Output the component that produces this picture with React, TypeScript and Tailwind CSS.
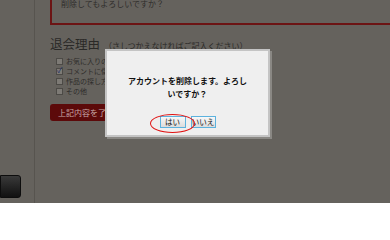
import React from 'react';

const reasons = [
  { label: 'お気に入りの作品が見つからない', checked: false },
  { label: 'コメントに傷ついた', checked: true },
  { label: '作品の探し方がわからない', checked: false },
  { label: 'その他', checked: false },
];

const font = { fontFamily: '"Noto Sans CJK JP", "Noto Sans", sans-serif' };

const App = () => {
  return (
    <div className="relative flex w-[390px] h-[203px] overflow-hidden bg-[#65625d]" style={font}>
      {/* left rail */}
      <div className="flex flex-col justify-end w-[35px] shrink-0 border-r border-[#57544f] pb-[5px]">
        <div className="w-[21px] h-[23px] rounded-r-[3px] border border-[#0d0d0d] bg-gradient-to-b from-[#3a3a3a] to-[#111111]" />
      </div>

      {/* page content (dimmed) */}
      <div className="flex flex-col pl-[15px] w-full">
        <div className="-mt-[12px] h-[37px] border-2 border-[#6c1414] pl-[9px] pt-[9px] w-[400px]">
          <p className="text-[8px] leading-[10px] text-[#2e2c2a]">削除してもよろしいですか？</p>
        </div>

        <div className="flex items-end mt-[12px] h-[14px]">
          <span className="text-[12.5px] leading-[14px] text-[#2a2927]">退会理由</span>
          <span className="ml-[4px] text-[8px] leading-[11px] text-[#2a2927]">（さしつかえなければご記入ください）</span>
        </div>

        <ul className="mt-[5px] ml-[6px] flex flex-col">
          {reasons.map(r => (
            <li key={r.label} className="flex items-center h-[10px] gap-[3px]">
              <span className="relative w-[7px] h-[7px] border border-[#4c4a46] bg-[#7d7a75]">
                {r.checked && (
                  <span className="absolute -top-[3px] left-0 text-[8px] leading-[8px] text-[#1c2e66]">✓</span>
                )}
              </span>
              <span className="text-[7px] leading-[10px] text-[#2e2c2a] whitespace-nowrap">{r.label}</span>
            </li>
          ))}
        </ul>

        <div className="mt-[8px] w-[110px] h-[17px] rounded-[3px] bg-[#5c0a0a] flex items-center pl-[8px]">
          <span className="text-[8px] text-[#c9a9a9] whitespace-nowrap">上記内容を了承して退会する</span>
        </div>
      </div>

      {/* confirm dialog */}
      <div className="absolute left-[105px] top-[49px] w-[165px] h-[88px] border-2 border-[#c4c4c4] bg-[#efefef] shadow-[2px_2px_0_#8a8884] flex flex-col items-center">
        <p className="mt-[24px] text-center text-[8px] leading-[12.5px] text-[#111] font-bold">
          アカウントを削除します。よろし
          <br />
          いですか？
        </p>
        <div className="mt-auto mb-[7px] flex gap-[5px]">
          <button className="w-[26px] h-[12px] border border-[#5cb2de] bg-gradient-to-b from-[#f8f8f8] to-[#dcdcdc] text-[7.5px] leading-[10px] text-[#111]">
            はい
          </button>
          <button className="w-[25px] h-[12px] border border-[#5cb2de] bg-gradient-to-b from-[#f8f8f8] to-[#dcdcdc] text-[7.5px] leading-[10px] text-[#111]">
            いいえ
          </button>
        </div>
      </div>

      {/* annotation ring */}
      <div className="absolute left-[150px] top-[114px] w-[45px] h-[19px] rounded-[50%] border border-[#e01010]" />
    </div>
  );
};

export default App;
